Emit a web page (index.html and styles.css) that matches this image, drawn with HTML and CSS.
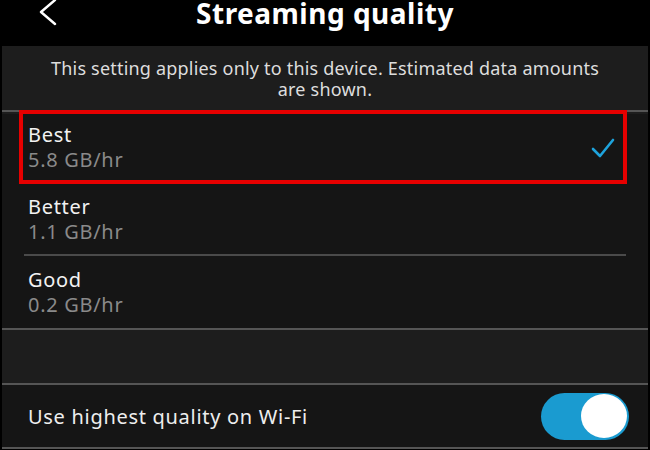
FILE: index.html
```html
<!DOCTYPE html>
<html lang="en">
<head>
    <meta charset="UTF-8">
    <meta name="viewport" content="width=device-width, initial-scale=1.0">
    <title>Streaming quality</title>
    <link rel="stylesheet" href="styles.css">
</head>
<body>
<div class="header">
    <span class="back">
        <svg width="20" height="30" viewBox="0 0 20 30"><path d="M17 2 L3 14 L17 26" fill="none" stroke="#fff" stroke-width="2.4" stroke-linecap="round" stroke-linejoin="round"/></svg>
    </span>
    <h1>Streaming quality</h1>
</div>
<div class="panel">
    <p class="note">This setting applies only to this device. Estimated data amounts are shown.</p>
    <ul class="options">
        <li class="option selected">
            <div>
                <div class="name">Best</div>
                <div class="rate">5.8 GB/hr</div>
            </div>
            <svg class="check" width="24" height="22" viewBox="0 0 24 22"><path d="M2 12 L9 19 L22 3" fill="none" stroke="#1ea3dc" stroke-width="2.6" stroke-linecap="round" stroke-linejoin="round"/></svg>
        </li>
        <li class="option line">
            <div>
                <div class="name">Better</div>
                <div class="rate">1.1 GB/hr</div>
            </div>
        </li>
        <li class="option">
            <div>
                <div class="name">Good</div>
                <div class="rate">0.2 GB/hr</div>
            </div>
        </li>
    </ul>
    <div class="spacer"></div>
    <div class="wifi">
        <span>Use highest quality on Wi-Fi</span>
        <span class="toggle on"><span class="knob"></span></span>
    </div>
</div>
</body>
</html>
```

FILE: styles.css
```css
*{
    margin: 0;
    padding: 0;
    box-sizing: border-box;
}
body{
    background: #000;
    font-family: "Noto Sans", "Open Sans", sans-serif;
    color: #eee;
}
.header{
    height: 46px;
    display: flex;
    align-items: flex-start;
    justify-content: center;
    position: relative;
}
.header h1{
    font-size: 28px;
    line-height: 26px;
    letter-spacing: 0.5px;
    font-weight: 700;
    color: #fff;
}
.back{
    position: absolute;
    left: 38px;
    top: -2px;
}
.panel{
    background: #1d1d1d;
    margin: 0 2px;
}
.note{
    height: 66px;
    padding: 12px 40px 0;
    text-align: center;
    font-size: 18px;
    line-height: 21px;
    letter-spacing: 0.2px;
    color: #ddd;
    border-bottom: 2px solid #555;
}
.options{
    list-style: none;
    background: #151515;
    padding: 0 22px;
    border-bottom: 2px solid #555;
}
.option{
    height: 72px;
    display: flex;
    align-items: center;
    justify-content: space-between;
    padding: 0 4px;
}
.option.line{
    border-bottom: 2px solid #4a4a4a;
}
.option.selected{
    outline: 4px solid #e60000;
    margin: 2px 3px 4px -1px;
    height: 66px;
    padding: 0 8px 0 5px;
}
.name{
    font-size: 20px;
    line-height: 25px;
    letter-spacing: 0.7px;
    color: #f2f2f2;
}
.rate{
    font-size: 20px;
    line-height: 25px;
    letter-spacing: 0.7px;
    color: #8a8a8a;
}
.check{
    margin-top: 2px;
}
.spacer{
    height: 55px;
    border-bottom: 2px solid #555;
}
.wifi{
    height: 64px;
    background: #151515;
    display: flex;
    align-items: center;
    justify-content: space-between;
    padding: 0 19px 0 26px;
    font-size: 20px;
    letter-spacing: 0.7px;
    color: #eee;
    border-bottom: 2px solid #555;
}
.toggle{
    width: 88px;
    height: 47px;
    border-radius: 24px;
    background: #1a9bd0;
    display: flex;
    align-items: center;
    justify-content: flex-end;
    padding: 2px;
}
.knob{
    width: 46px;
    height: 44px;
    border-radius: 50%;
    background: #fff;
}
```
